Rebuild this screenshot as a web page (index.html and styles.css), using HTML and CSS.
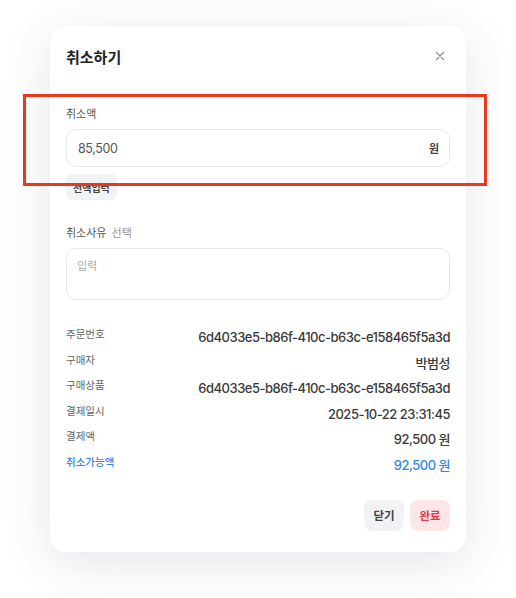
FILE: index.html
```html
<!DOCTYPE html>
<html lang="ko">
<head>
  <meta charset="UTF-8" />
  <meta name="viewport" content="width=device-width, initial-scale=1.0"/>
  <title>취소하기</title>
  <link rel="stylesheet" href="styles.css">
</head>
<body>

  <div class="modal">
    <div class="modal-head">
      <h2 class="modal-title">취소하기</h2>
      <button class="close-btn" aria-label="닫기">
        <svg width="10" height="10" viewBox="0 0 10 10"><path d="M1.5 1.5L8.5 8.5M8.5 1.5L1.5 8.5" stroke="#8a8f98" stroke-width="1.2" stroke-linecap="round"/></svg>
      </button>
    </div>

    <div class="field">
      <label class="field-label">취소액</label>
      <div class="amount-input">
        <span class="amount-value">85,500</span>
        <span class="amount-unit">원</span>
      </div>
      <div><button class="chip">전액입력</button></div>
    </div>

    <div class="field reason">
      <label class="field-label">취소사유 <span class="muted">선택</span></label>
      <div class="textarea">입력</div>
    </div>

    <dl class="info">
      <div class="info-row"><dt>주문번호</dt><dd>6d4033e5-b86f-410c-b63c-e158465f5a3d</dd></div>
      <div class="info-row"><dt>구매자</dt><dd>박범성</dd></div>
      <div class="info-row"><dt>구매상품</dt><dd>6d4033e5-b86f-410c-b63c-e158465f5a3d</dd></div>
      <div class="info-row"><dt>결제일시</dt><dd>2025-10-22 23:31:45</dd></div>
      <div class="info-row"><dt>결제액</dt><dd>92,500 원</dd></div>
      <div class="info-row accent"><dt>취소가능액</dt><dd>92,500 원</dd></div>
    </dl>

    <div class="modal-foot">
      <button class="btn btn-gray">닫기</button>
      <button class="btn btn-red">완료</button>
    </div>
  </div>

  <div class="highlight"></div> <!-- 강조 표시 -->

</body>
</html>
```

FILE: styles.css
```css
html {
  height: 100%;
}

body {
  margin: 0;
  min-height: 100%;
  box-sizing: border-box;
  padding: 26px 0 48px;
  font-family: Inter, "Noto Sans CJK KR", sans-serif;
  background-color: #fff;
  color: #333;
}

.modal {
  width: 416px;
  margin: 0 auto;
  box-sizing: border-box;
  padding: 20px 16px 21px;
  background: #fff;
  border-radius: 16px;
  box-shadow: 0 10px 50px rgba(30, 40, 70, 0.12);
}

.modal-head {
  display: flex;
  justify-content: space-between;
  align-items: center;
  height: 24px;
}

.modal-title {
  margin: 0;
  font-size: 15px;
  font-weight: 700;
  color: #222;
  line-height: 24px;
}

.close-btn {
  width: 20px;
  height: 20px;
  padding: 0;
  border: 0;
  background: none;
  display: flex;
  align-items: center;
  justify-content: center;
  margin-top: -4px;
}

.field {
  display: flex;
  flex-direction: column;
  gap: 6px;
  margin-top: 35px;
}

.field-label {
  font-size: 11px;
  line-height: 18px;
  color: #555;
}

.muted {
  color: #999;
  margin-left: 2px;
}

.amount-input {
  height: 38px;
  box-sizing: border-box;
  border: 1px solid #e6e8eb;
  border-radius: 10px;
  display: flex;
  align-items: center;
  justify-content: space-between;
  padding: 0 10px 0 11px;
}

.amount-value {
  font-size: 12.5px;
  letter-spacing: -0.4px;
  color: #555;
}

.amount-unit {
  font-size: 11px;
  font-weight: 700;
  color: #444;
}

.chip {
  margin-top: 1px;
  height: 26px;
  padding: 0 7px;
  border: 0;
  border-radius: 6px;
  background: #f1f2f4;
  font-family: inherit;
  font-size: 10px;
  font-weight: 700;
  color: #444;
}

.reason {
  margin-top: 24px;
}

.textarea {
  height: 52px;
  box-sizing: border-box;
  border: 1px solid #e6e8eb;
  border-radius: 10px;
  padding: 9px 10px;
  font-size: 11px;
  line-height: 16px;
  color: #aaa;
}

.info {
  margin: 27px 0 0;
  display: flex;
  flex-direction: column;
  gap: 5.6px;
}

.info-row {
  display: flex;
  justify-content: space-between;
  align-items: flex-start;
  height: 20px;
}

.info-row dt {
  font-size: 10.5px;
  line-height: 16px;
  color: #666;
}

.info-row dd {
  margin: 0;
  font-size: 13px;
  letter-spacing: -0.5px;
  line-height: 20px;
  font-weight: 500;
  color: #3a3a3a;
}

.info-row.accent dt,
.info-row.accent dd {
  color: #3485e8;
}

.info-row.accent dt {
  font-weight: 500;
}

.modal-foot {
  display: flex;
  justify-content: flex-end;
  gap: 6px;
  margin-top: 25px;
}

.btn {
  height: 31px;
  width: 40px;
  padding: 0;
  border: 0;
  border-radius: 8px;
  font-family: inherit;
  font-size: 11.5px;
  font-weight: 700;
}

.btn-gray {
  background: #f1f2f4;
  color: #444;
}

.btn-red {
  background: #fde6e8;
  color: #e0384a;
}

.highlight {
  position: absolute;
  left: 23px;
  top: 94px;
  width: 464px;
  height: 92px;
  box-sizing: border-box;
  border: 3px solid #e8391c;
}
```
